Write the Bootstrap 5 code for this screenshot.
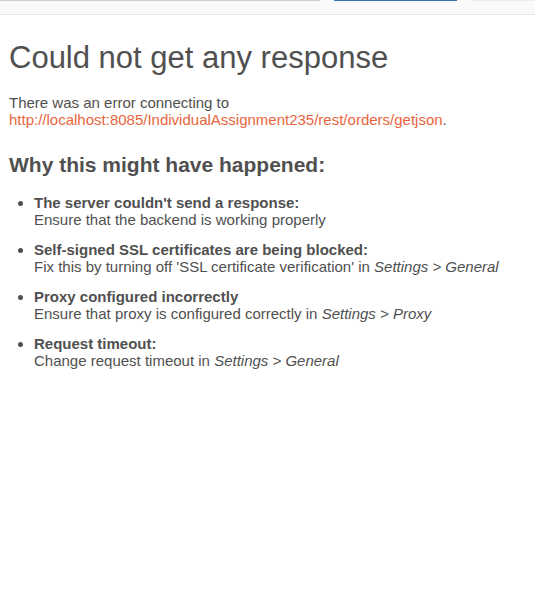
<!DOCTYPE html>
<html lang="en">
<head>
<meta charset="utf-8">
<meta name="viewport" content="width=device-width, initial-scale=1">
<title>Could not get any response</title>
<link href="https://cdn.jsdelivr.net/npm/bootstrap@5.3.0/dist/css/bootstrap.min.css" rel="stylesheet">
<style>
body { font-family: "Liberation Sans", Arial, sans-serif; font-size: 15px; line-height: 17px; color: #505050; background: #fff; }
.request-bar { height: 15px; background: #fafafa; border-bottom: 1px solid #e6e6e6; }
.bar-end { height: 1px; }
.url-end { flex: 320; background: #d0d0d0; }
.send-end { flex: 123; background: #3272b4; }
.save-end { flex: 64; background: #ededed; }
.bar-gap { flex: 14; }
.response-panel { padding: 24px 9px; }
.response-title { font-size: 31px; line-height: 38px; margin-bottom: 17px; }
.reasons-title { font-size: 21px; line-height: 26px; }
.response-link { color: #e8653c; }
.reasons { padding-left: 25px; }
.reasons li { margin-bottom: 13px; }
</style>
</head>
<body>
<header class="request-bar">
  <div class="d-flex">
    <div class="bar-end url-end"></div><div class="bar-gap"></div>
    <div class="bar-end send-end"></div><div class="bar-gap"></div>
    <div class="bar-end save-end"></div>
  </div>
</header>
<main class="response-panel">
  <h1 class="response-title fw-normal">Could not get any response</h1>
  <p class="mb-4">There was an error connecting to<br><a class="response-link text-decoration-none" href="http://localhost:8085/IndividualAssignment235/rest/orders/getjson">http://localhost:8085/IndividualAssignment235/rest/orders/getjson</a>.</p>
  <h2 class="reasons-title fw-bold mb-3">Why this might have happened:</h2>
  <ul class="reasons mb-0">
    <li><strong>The server couldn't send a response:</strong><br>Ensure that the backend is working properly</li>
    <li><strong>Self-signed SSL certificates are being blocked:</strong><br>Fix this by turning off 'SSL certificate verification' in <em>Settings &gt; General</em></li>
    <li><strong>Proxy configured incorrectly</strong><br>Ensure that proxy is configured correctly in <em>Settings &gt; Proxy</em></li>
    <li><strong>Request timeout:</strong><br>Change request timeout in <em>Settings &gt; General</em></li>
  </ul>
</main>
<script src="https://cdn.jsdelivr.net/npm/bootstrap@5.3.0/dist/js/bootstrap.bundle.min.js"></script>
</body>
</html>
